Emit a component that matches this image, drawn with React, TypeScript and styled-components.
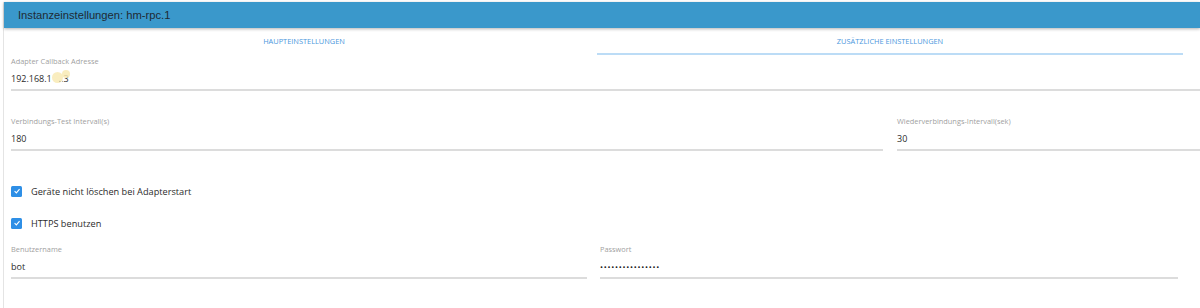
import styled, { createGlobalStyle } from "styled-components";

const GlobalStyle = createGlobalStyle`
  body {
    margin: 0;
    background: #fff;
    font-family: "Open Sans", "Noto Sans", sans-serif;
  }
`;

const Page = styled.div`
  padding: 2px 0 0 3px;
  height: 306px;
  overflow: hidden;
`;

const Panel = styled.div`
  border-left: 1px solid #e4e4e4;
  height: 100%;
`;

const Header = styled.div`
  height: 26px;
  line-height: 26px;
  padding-left: 14px;
  background: #3a98cb;
  color: #1f2a33;
  font-family: "Liberation Sans", Arial, sans-serif;
  font-size: 11.2px;
  box-shadow: 0 1px 3px rgba(0, 0, 0, 0.3);
  position: relative;
`;

const Content = styled.div`
  padding-left: 7px;
`;

const Tabs = styled.div`
  display: flex;
  width: 1172px;
`;

const Tab = styled.div<{ $active?: boolean }>`
  flex: 1;
  height: 25px;
  line-height: 27px;
  text-align: center;
  font-size: 7.4px;
  color: #4b97dd;
  text-transform: uppercase;
  border-bottom: 2px solid ${({ $active }) => ($active ? "#bcdcf6" : "transparent")};
`;

const Row = styled.div<{ $top: number; $gap?: number }>`
  display: flex;
  gap: ${({ $gap }) => $gap ?? 14}px;
  margin-top: ${({ $top }) => $top}px;
`;

const Field = styled.div<{ $width?: number }>`
  ${({ $width }) => ($width ? `width: ${$width}px;` : "flex: 1;")}
  border-bottom: 2px solid #dcdcdc;
`;

const Label = styled.div`
  height: 12px;
  line-height: 12px;
  font-size: 7.4px;
  color: #9f9f9f;
  margin-bottom: 2px;
`;

const Value = styled.div`
  height: 20px;
  line-height: 20px;
  font-size: 9px;
  color: #2b2b2b;
  white-space: nowrap;
`;

const Dots = styled(Value)`
  font-size: 8px;
  letter-spacing: 0.75px;
  color: #222;
`;

const Redact = styled.span`
  position: relative;
`;

const Blob = styled.span<{ $x: number; $y: number; $size: number }>`
  position: absolute;
  left: ${({ $x }) => $x}px;
  top: ${({ $y }) => $y}px;
  width: ${({ $size }) => $size}px;
  height: ${({ $size }) => $size}px;
  border-radius: 50%;
  background: rgba(248, 234, 180, 0.85);
  filter: blur(0.7px);
`;

const Masked = styled.span`
  position: relative;
  color: #555;
  opacity: 0.6;
`;

const Checks = styled.div`
  margin-top: 24px;
`;

const CheckRow = styled.label`
  display: flex;
  align-items: center;
  gap: 9px;
  height: 32px;
  font-size: 9.2px;
  color: #2b2b2b;
`;

const Box = styled.span`
  width: 11px;
  height: 11px;
  border-radius: 1.5px;
  background: #2e8fe6;
  display: flex;
  align-items: center;
  justify-content: center;
`;

const Check = () => (
  <Box>
    <svg width="8" height="8" viewBox="0 0 10 10">
      <path d="M2 5.2 L4.2 7.3 L8.2 2.8" fill="none" stroke="#fff" strokeWidth="1.4" />
    </svg>
  </Box>
);

export default function App() {
  return (
    <>
      <GlobalStyle />
      <Page>
        <Panel>
          <Header>Instanzeinstellungen: hm-rpc.1</Header>
          <Content>
            <Tabs>
              <Tab>Haupteinstellungen</Tab>
              <Tab $active>Zusätzliche Einstellungen</Tab>
            </Tabs>
            <Row $top={0}>
              <Field>
                <Label>Adapter Callback Adresse</Label>
                <Value>
                  192.168.1
                  <Redact>
                    <Blob $x={0} $y={0} $size={11} />
                    <Blob $x={10} $y={-2} $size={8} />
                    <Masked>&nbsp;&nbsp;&nbsp;..</Masked>
                  </Redact>
                  3
                </Value>
              </Field>
            </Row>
            <Row $top={24}>
              <Field $width={872}>
                <Label>Verbindungs-Test Intervall(s)</Label>
                <Value>180</Value>
              </Field>
              <Field>
                <Label>Wiederverbindungs-Intervall(sek)</Label>
                <Value>30</Value>
              </Field>
            </Row>
            <Checks>
              <CheckRow>
                <Check />
                Geräte nicht löschen bei Adapterstart
              </CheckRow>
              <CheckRow>
                <Check />
                HTTPS benutzen
              </CheckRow>
            </Checks>
            <Row $top={4} $gap={13}>
              <Field $width={576}>
                <Label>Benutzername</Label>
                <Value>bot</Value>
              </Field>
              <Field $width={578}>
                <Label>Passwort</Label>
                <Dots>{"•".repeat(16)}</Dots>
              </Field>
            </Row>
          </Content>
        </Panel>
      </Page>
    </>
  );
}
